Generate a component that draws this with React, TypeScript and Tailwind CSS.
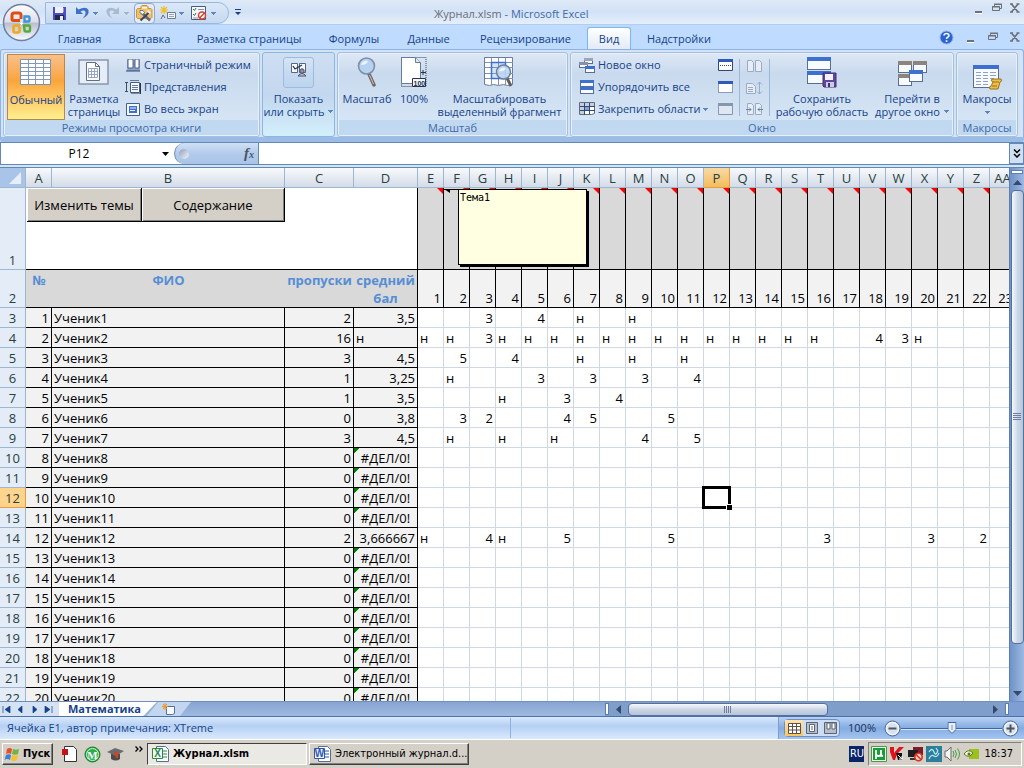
import React, { useState } from 'react';

const COLUMNS = 'E F G H I J K L M N O P Q R S T U V W X Y Z AA'.split(' ');

interface Student {
  missed: number;
  average: string;
  marks: Record<string, string>;
}

const NO_AVERAGE = '#ДЕЛ/0!';

const ABSENT_ROW: Record<string, string> = {
  E: 'н', F: 'н', G: '3', H: 'н', I: 'н', J: 'н', K: 'н', L: 'н', M: 'н', N: 'н', O: 'н',
  P: 'н', Q: 'н', R: 'н', S: 'н', T: 'н', V: '4', W: '3', X: 'н',
};

const empty: Student = { missed: 0, average: NO_AVERAGE, marks: {} };

const STUDENTS: Student[] = [
  { missed: 2, average: '3,5', marks: { G: '3', I: '4', K: 'н', M: 'н' } },
  { missed: 16, average: 'н', marks: ABSENT_ROW },
  { missed: 3, average: '4,5', marks: { F: '5', H: '4', K: 'н', M: 'н', O: 'н' } },
  { missed: 1, average: '3,25', marks: { F: 'н', I: '3', K: '3', M: '3', O: '4' } },
  { missed: 1, average: '3,5', marks: { H: 'н', J: '3', L: '4' } },
  { missed: 0, average: '3,8', marks: { F: '3', G: '2', J: '4', K: '5', N: '5' } },
  { missed: 3, average: '4,5', marks: { F: 'н', H: 'н', J: 'н', M: '4', O: '5' } },
  empty, empty, empty, empty,
  { missed: 2, average: '3,666667', marks: { E: 'н', G: '4', H: 'н', J: '5', N: '5', T: '3', X: '3', Z: '2' } },
  empty, empty, empty, empty, empty, empty, empty, empty,
];

/* ---------- small shared bits ---------- */

function Caret({ className = 'fill-[#5b86c4]' }: { className?: string }) {
  return (
    <svg width="5" height="3" viewBox="0 0 5 3" shapeRendering="crispEdges" className={`shrink-0 ${className}`}><path d="M0 0h5v1H0zM1 1h3v1H1zM2 2h1v1H2z" /></svg>
  );
}

function MinimizeGlyph() {
  return <svg width="10" height="12" viewBox="0 0 10 12"><path d="M1 9h7v2H1z" fill="#6d7076" /><path d="M1 11h7v1H1z" fill="#fff" /></svg>;
}

function RestoreGlyph() {
  return (
    <svg width="10" height="12" viewBox="0 0 10 12" fill="none" stroke="#6d7076">
      <path d="M2.500 4.500v-2h7v4h-2M2 2h8" />
      <path d="M.5 4.500h7v4h-7zM0 5h8" />
    </svg>
  );
}

function CloseGlyph() {
  return <svg width="10" height="12" viewBox="0 0 10 12"><path d="M1.500 2l6.500 8M8 2l-6.500 8M0 2h3M6.500 2h3M0 10h3M6.500 10h3" stroke="#6d7076" strokeWidth="1.700" /></svg>;
}

/* ---------- title bar ---------- */

function OfficeButton() {
  return (
    <button aria-label="Кнопка Office" className="absolute left-0.5 top-0.5 z-20 size-10">
      <svg width="40" height="40" viewBox="0 0 40 40">
        <defs>
          <linearGradient id="orb" x1="0" y1="0" x2="0" y2="1">
            <stop offset="0" stopColor="#fdfdfe" />
            <stop offset=".48" stopColor="#dde0ea" />
            <stop offset=".52" stopColor="#b9bfd0" />
            <stop offset="1" stopColor="#fbfcff" />
          </linearGradient>
        </defs>
        <circle cx="19.500" cy="20.500" r="18" fill="url(#orb)" stroke="#6f7f9c" strokeWidth="1.500" />
        <g fill="none" strokeWidth="3">
          <path d="M18 18.500h-6.500q-1.500 0-1.500-1.500v-4q0-2 2-2h5q2 0 2 2v4" stroke="#df4d12" />
          <path d="M22.500 14.500h4q1 0 1 1v3q0 1-1 1h-4z" stroke="#3f93d8" strokeWidth="2.400" />
          <path d="M18 23.500h-5q-1.500 0-1.500 1.500v4q0 1.500 1.500 1.500h3q1.500 0 1.500-1.500v-4" stroke="#f2a81a" strokeWidth="2.600" />
          <path d="M22 23.500h5q1 0 1 1v4q0 1-1 1h-3q-1.500 0-1.500-1.500z" stroke="#55ab3a" strokeWidth="2.400" />
        </g>
        <g fill="#fff"><path d="M18 21h3v1h-3zM19 20h1v3h-1z" /></g>
      </svg>
    </button>
  );
}

function QuickAccess() {
  return (
    <div className="ml-[45px] mt-0.5 flex h-[22px] w-[184px] items-center rounded-r-full border border-[#9cb9dd] bg-gradient-to-b from-[#dbe8f8] to-[#c5d9f2] pl-1.5">
      <button aria-label="Сохранить" className="w-[23px]">
        <svg width="15" height="15" viewBox="0 0 15 15">
          <path d="M1 1h13v13H1z" fill="#4b50b8" />
          <path d="M3 1h8v6H3z" fill="#eef1fb" /><path d="M11 2h1v4h-1z" fill="#8f95df" />
          <path d="M3 9h9v5H3z" fill="#23264f" /><path d="M8 10h3v4H8z" fill="#e9ebf5" />
        </svg>
      </button>
      <button aria-label="Отменить" className="flex w-[31px] items-center gap-[3px]">
        <svg width="15" height="14" viewBox="0 0 15 14"><path d="M1 1v7h7L5.500 5.500q4-2 5 .5.500 3-3 6.500 7-3 6-8.500Q11 0 3.500 3.500z" fill="#3f6fc8" /></svg>
        <Caret />
      </button>
      <button aria-label="Повторить" className="flex w-7 items-center gap-[3px]">
        <svg width="15" height="14" viewBox="0 0 15 14"><path d="M13 1v7H6l2.500-2.500q-4-2-5 .5-.5 3 3 6.500-7-3-6-8.500Q3 0 10.500 3.500z" fill="#a9b9cf" /></svg>
        <Caret className="fill-[#a5b4c9]" />
      </button>
      <button aria-label="Конструктор" className="mr-[5px] flex size-[21px] items-center justify-center rounded-sm border border-[#8fa7ca] bg-[#e2ebf8]">
        <svg width="17" height="17" viewBox="0 0 17 17">
          <path d="M.5 4.500l1-1h3.500v-2l1-1h5l1 1v2H15l1 1v8l-1 1H1.500l-1-1z" fill="#f1c06a" stroke="#cf9432" />
          <path d="M6 2h5v1.500H6z" fill="#fff" />
          <path d="M6 8l8 7.500" stroke="#5a6a84" strokeWidth="2.400" />
          <path d="M13 7.500l-8.500 8" stroke="#39475f" strokeWidth="2" />
          <path d="M4 5.500h3l1.500 2L7 9.500l-3-1.500z" fill="#eef3fa" stroke="#54637c" strokeWidth=".8" />
          <path d="M11.500 5.500l3 3" stroke="#eef3fa" strokeWidth="2" />
        </svg>
      </button>
      <button aria-label="Вставить элемент" className="flex w-[31px] items-center gap-0.5">
        <svg width="17" height="15" viewBox="0 0 17 15">
          <path d="M4 0v8M0 4h8M1 1l6 6M7 1L1 7" stroke="#f0c020" strokeWidth="1.200" />
          <path d="M7.500 6.500h8v6h-8z" fill="#f2f5fa" stroke="#6c7d98" /><path d="M9 8.500h5M9 10.500h5" stroke="#94a3bb" />
          <path d="M1 13l2-4 2 3" stroke="#5d6b83" fill="none" />
        </svg>
        <Caret />
      </button>
      <button aria-label="Режим правки" className="flex items-center gap-[3px]">
        <svg width="17" height="15" viewBox="0 0 17 15">
          <path d="M.5.500h14v13H.5z" fill="#f4f6fa" stroke="#4a5b78" />
          <path d="M2 3l1.500 1.500L5 2M2 8l1.500 1.500L5 7" stroke="#3b6f3d" fill="none" /><path d="M7 3.500h6M2 12h5" stroke="#8494ae" />
          <circle cx="11" cy="9.500" r="3.500" fill="#fff" stroke="#d8412c" strokeWidth="1.500" /><path d="M8.500 12l5-5" stroke="#d8412c" strokeWidth="1.400" />
        </svg>
        <Caret />
      </button>
    </div>
  );
}

function TitleBar() {
  return (
    <header className="relative flex h-[25px] shrink-0 border-b border-[#b0cdf2] bg-gradient-to-b from-[#dfe9f6] via-[#d2e2f7] to-[#e6effa]">
      <QuickAccess />
      <button aria-label="Настройка панели" className="ml-1.5 h-6">
        <svg width="6" height="7" viewBox="0 0 6 7"><path d="M0 0h6v1H0zM0 3h6L3 6z" fill="#1d3f84" /></svg>
      </button>
      <h1 className="flex-1 pt-1.5 pl-[193px] text-[11px] leading-4 whitespace-nowrap text-[#3e6aaa]"><span className="text-[#6b6e75]">Журнал.xlsm</span> - Microsoft Excel</h1>
      <div className="flex items-start gap-2 pt-0.5 pr-1">
        <button aria-label="Свернуть"><MinimizeGlyph /></button>
        <button aria-label="Восстановить"><RestoreGlyph /></button>
        <button aria-label="Закрыть"><CloseGlyph /></button>
      </div>
    </header>
  );
}

function TabBar() {
  const tab = 'h-6 pt-1 px-4 whitespace-nowrap flex justify-center';
  return (
    <nav className="flex h-6 shrink-0 bg-[#bfdbff] pl-[43px] text-[11px] leading-5 text-[#15428b]">
      <button className={`${tab} w-[73px]`}>Главная</button>
      <button className={`${tab} w-[67px]`}>Вставка</button>
      <button className={`${tab} w-[132px]`}>Разметка страницы</button>
      <button className={`${tab} w-[78px]`}>Формулы</button>
      <button className={`${tab} w-[71px]`}>Данные</button>
      <button className={`${tab} w-[123px]`}>Рецензирование</button>
      <button className="mt-0.5 flex h-[23px] w-11 justify-center rounded-t-[3px] border border-b-0 border-[#8db2e3] bg-gradient-to-b from-white to-[#e0eaf6] pt-px shadow-[0_0_2px_#7ef]">Вид</button>
      <button className={`${tab} w-24`}>Надстройки</button>
      <div className="flex flex-1 items-center justify-end gap-3 pr-1">
        <button aria-label="Справка">
          <svg width="15" height="15" viewBox="0 0 15 15">
            <circle cx="7.500" cy="7.500" r="6.500" fill="#2d63cf" stroke="#8fb5ec" />
            <path d="M5 5.500q.3-2 2.500-2t2.500 2q0 1-1.300 1.700Q7.500 8 7.500 9" stroke="#fff" strokeWidth="1.600" fill="none" /><path d="M6.700 10.300h1.700V12H6.700z" fill="#fff" />
          </svg>
        </button>
        <button aria-label="Свернуть книгу"><MinimizeGlyph /></button>
        <button aria-label="Восстановить книгу"><RestoreGlyph /></button>
        <button aria-label="Закрыть книгу"><CloseGlyph /></button>
      </div>
    </nav>
  );
}

/* ---------- ribbon ---------- */

function Group({ title, className, children }: { title: string; className: string; children: React.ReactNode }) {
  return (
    <section className={`flex h-[85px] flex-col overflow-hidden rounded-[3px] border border-[#a3c0e2] bg-gradient-to-b from-[#dee8f5] from-0% via-[#c9daee] via-25% to-[#d9e9f7] shadow-[inset_0_0_0_1px_#e6f0fa] ${className}`}>
      <div className="flex min-h-0 flex-1">{children}</div>
      <h2 className="mx-px mb-px h-[15px] bg-[#c1d8f1] text-center text-[11px] leading-4 text-[#3e6aaa]">{title}</h2>
    </section>
  );
}

function BigButton({ icon, lines, menu, className = '' }: { icon: React.ReactNode; lines: string[]; menu?: boolean; className?: string }) {
  return (
    <button className={`flex flex-col items-center pt-1 whitespace-nowrap ${className}`}>
      <span className="flex h-[35px] items-start justify-center">{icon}</span>
      {lines.map((line, i) => (
        <span key={line} className="flex items-center gap-1 leading-[13px]">
          {line}{menu && i === lines.length - 1 && i > 0 && <Caret />}
        </span>
      ))}
      {menu && lines.length === 1 && <span className="pt-1.5"><Caret /></span>}
    </button>
  );
}

function SmallButton({ icon, label, menu }: { icon: React.ReactNode; label: string; menu?: boolean }) {
  return (
    <button className="flex h-[22px] items-center gap-[3px] whitespace-nowrap">
      <span className="flex w-4 justify-center">{icon}</span>{label}{menu && <Caret />}
    </button>
  );
}

function GridIcon() {
  return (
    <svg width="32" height="27" viewBox="0 0 32 27">
      <path d="M.5.500h30v25H.5z" fill="#fff" stroke="#7890b5" />
      <path d="M1 4.500h30M1 8.500h30M1 12.500h30M1 16.500h30M1 20.500h30M8.500 1v25M15.500 1v25M23.500 1v25" stroke="#8098bb" />
    </svg>
  );
}

function PageLayoutIcon() {
  return (
    <svg width="32" height="27" viewBox="0 0 32 27">
      <path d="M1 1h29v24H1z" fill="#e4edf8" stroke="#8b97aa" strokeWidth="1.500" />
      <path d="M8.500 3.500h9l4 4v14h-13z" fill="#fff" stroke="#5f6f88" /><path d="M17.500 3.500v4h4" fill="none" stroke="#5f6f88" />
      <path d="M10.500 9.500h9v9h-9zM10.500 12.500h9M10.500 15.500h9M13.500 9.500v9M16.500 9.500v9" fill="none" stroke="#93a5c0" />
    </svg>
  );
}

function PageBreakIcon() {
  return (
    <svg width="15" height="13" viewBox="0 0 15 13">
      <path d="M1 1h13v11H1z" fill="#8ea3c4" /><path d="M2 0h5v9H2zM9 0h4v9H9z" fill="#fff" stroke="#46608e" /><path d="M0 11.500h14v1H0z" fill="#2f4674" />
    </svg>
  );
}

function ViewsIcon() {
  return (
    <svg width="16" height="14" viewBox="0 0 16 14" fill="none">
      <path d="M0 2.500h3M0 11.500h3M1.500 3v9" stroke="#3d4d68" />
      <path d="M5.500 2.500h9v10h-9z" fill="#f4f7fc" stroke="#4a5a78" /><path d="M5 .500h9M7 5.500h6M7 7.500h6M7 9.500h6" stroke="#5f789f" /><path d="M15.500 3v11H6" stroke="#26344f" />
    </svg>
  );
}

function FullScreenIcon() {
  return (
    <svg width="14" height="13" viewBox="0 0 14 13">
      <path d="M.5.500h13v12H.5z" fill="#f4f8ff" stroke="#46608e" /><path d="M3 3h8v7H3z" fill="#3e70cf" /><path d="M4 5h6M4 7.500h5" stroke="#e8f0ff" />
    </svg>
  );
}

function ShowHideIcon() {
  return (
    <span className="flex size-[31px] items-start justify-center rounded-[3px] border border-[#9dbbdf] bg-gradient-to-b from-[#d5e4f5] via-[#c6daf0] to-[#bcd5ee] pt-1">
      <svg width="16" height="16" viewBox="0 0 16 16">
        <path d="M.5 1.500h6v9h-6zM8.500 1.500h6v9h-6z" fill="#f7f9fd" stroke="#5a6580" />
        <path d="M2 4l2 3 7-4" stroke="#26344f" fill="none" strokeWidth="1.300" />
        <circle cx="11" cy="9" r="2.200" fill="#8d93ad" stroke="#4b5064" /><path d="M7 14q4-5 8 0z" fill="#c9cddd" stroke="#4b5064" />
      </svg>
    </span>
  );
}

function MagnifierIcon() {
  return (
    <svg width="20" height="30" viewBox="0 0 20 30">
      <path d="M12 17l5 11" stroke="#6f6a68" strokeWidth="3.500" strokeLinecap="round" /><path d="M12.500 18l4 9" stroke="#c9c3bd" />
      <circle cx="9.500" cy="9" r="8" fill="#b5d2f1" stroke="#7d8fa9" strokeWidth="1.600" /><path d="M4 8q1-5 7-4-1 4-7 4z" fill="#e9f4ff" />
    </svg>
  );
}

function HundredIcon() {
  return (
    <svg width="26" height="31" viewBox="0 0 26 31">
      <path d="M.5.500h24.500v29H.5z" fill="none" stroke="#39465c" strokeDasharray="1 1" />
      <path d="M.5.500h14l5 5v21H.5z" fill="#fff" stroke="#6a7b96" /><path d="M14.500.500v5h5" fill="#dfe7f3" stroke="#6a7b96" />
      <path d="M20 15.500h5M22 13v5" stroke="#26344f" /><path d="M11.500 21.500h13v8h-13z" fill="#f3f5f9" stroke="#26344f" />
      <text x="12.500" y="28.500" fontSize="7" fontWeight="bold" fill="#26344f" fontFamily="Liberation Sans, sans-serif">100</text>
    </svg>
  );
}

function ZoomSelectionIcon() {
  return (
    <svg width="31" height="31" viewBox="0 0 31 31">
      <path d="M.5.500h28v27l-5 1-4-1-5 1-5-1-4 1-5-1z" fill="#fff" stroke="#6b7d9b" />
      <path d="M7 6h15v15H7z" fill="#d4e4fa" />
      <path d="M1 5.500h28M1 10.500h28M1 16.500h28M1 21.500h28M7.500 1v27M14.500 1v27M21.500 1v27" stroke="#7f93b3" /><path d="M7.500 5.500h14v16h-14z" fill="none" stroke="#3e70cf" strokeWidth="1.500" />
      <path d="M23 21l4 8" stroke="#645f5d" strokeWidth="3" /><circle cx="19.500" cy="15" r="7" fill="#bcd7f3" fillOpacity=".9" stroke="#6b7f9e" strokeWidth="1.500" /><path d="M15 14q2-5 7-3-2 4-7 3z" fill="#eef6ff" />
    </svg>
  );
}

function Win({ x, y, w, h, head = '#3e70cf' }: { x: number; y: number; w: number; h: number; head?: string }) {
  return (
    <g>
      <rect x={x + 0.5} y={y + 0.5} width={w - 1} height={h - 1} fill="#f7faff" stroke="#5a6e92" />
      <rect x={x} y={y} width={w} height={h > 9 ? 4 : 3} fill={head} />
    </g>
  );
}

function NewWindowIcon() {
  return <svg width="16" height="15" viewBox="0 0 16 15"><Win x={5} y={0} w={9} h={6} head="#9aa5ba" /><Win x={0} y={4} w={9} h={6} head="#8492ad" /><Win x={6} y={8} w={10} h={7} /></svg>;
}

function ArrangeIcon() {
  return <svg width="14" height="14" viewBox="0 0 14 14"><Win x={0} y={0} w={14} h={7} /><Win x={0} y={7} w={14} h={7} /></svg>;
}

function FreezeIcon() {
  return (
    <svg width="16" height="14" viewBox="0 0 16 14">
      <path d="M.5.500h15v11l-3 1H.5z" fill="#fff" stroke="#5c6c88" /><path d="M1 1h14v3H1zM1 4h4v8H1z" fill="#c6cedb" />
      <path d="M1 4.500h15M5.500 1v12M10.500 1v11M1 8.500h15" stroke="#33486f" /><path d="M6 5h4v3H6z" fill="#79a3e6" />
    </svg>
  );
}

function SaveWorkspaceIcon() {
  return (
    <svg width="32" height="32" viewBox="0 0 32 32">
      <Win x={1} y={0} w={24} h={13} /><Win x={1} y={14} w={24} h={13} />
      <path d="M17 16h13v14H18l-1-1z" fill="#5d479c" stroke="#3e2f74" /><path d="M19 17h8v6h-8z" fill="#f3f2fa" /><path d="M20 25h8v5h-8z" fill="#cfc9e4" /><path d="M22 26h2v4h-2z" fill="#3e2f74" />
    </svg>
  );
}

function SwitchWindowIcon() {
  return (
    <svg width="31" height="27" viewBox="0 0 31 27">
      <Win x={1} y={0} w={14} h={12} head="#8b8580" /><Win x={16} y={0} w={14} h={12} head="#8b8580" /><Win x={1} y={13} w={14} h={12} head="#8b8580" /><Win x={12} y={9} w={14} h={12} />
    </svg>
  );
}

function MacrosIcon() {
  return (
    <svg width="31" height="26" viewBox="0 0 31 26">
      <Win x={1} y={0} w={26} h={23} />
      <path d="M4 7.500h5M11 7.500h5M18 7.500h6M4 10.500h5M11 10.500h5M18 10.500h6M4 13.500h5M11 13.500h5M18 13.500h4M4 16.500h5M11 16.500h5M4 19.500h5M11 19.500h5" stroke="#8fa1bf" />
      <path d="M20 14h9q2 2-1 3l-2 7h-8q-2-2 1-3l2-4q-3-1-1-3z" fill="#edbd4c" stroke="#9a7218" /><path d="M21 17h6M20 21h5" stroke="#9a7218" />
    </svg>
  );
}

function SplitIcon({ kind }: { kind: 'split' | 'hide' | 'show' }) {
  return (
    <svg width="15" height="12" viewBox="0 0 15 12">
      <path d="M.5.500h14v11H.5z" fill={kind === 'show' ? '#dfe7f2' : '#fff'} stroke={kind === 'show' ? '#8795ad' : '#33486f'} strokeDasharray={kind === 'hide' ? '1 1' : undefined} />
      <path d="M0 0h15v3H0z" fill={kind === 'show' ? '#8795ad' : '#2c5bb8'} />
      {kind === 'split' && <path d="M2 6.500h11" stroke="#33486f" strokeDasharray="1 1" />}
    </svg>
  );
}

function CompareIcon({ kind }: { kind: 'side' | 'sync' | 'reset' }) {
  return (
    <svg width="17" height="14" viewBox="0 0 17 14" fill="none" stroke="#9aabc6">
      {kind === 'sync' ? (
        <>
          <path d="M.5 2.500h6l3 3v7h-9zM2 6.500h5M2 8.500h5M2 10.500h5" fill="#e6edf7" />
          <path d="M13.500 1v12M11 3.500L13.500 1 16 3.500M11 10.500l2.500 2.500 2.500-2.500" />
        </>
      ) : (
        <path d="M1.500 1.500h4l2 2v9h-6zM9.500 1.500h4l2 2v9h-6z" fill="#e6edf7" />
      )}
      {kind === 'reset' && <path d="M0 7.500h5M3 5.500l2 2-2 2M17 7.500h-5M14 5.500l-2 2 2 2" stroke="#6c82a6" />}
    </svg>
  );
}

function Ribbon() {
  return (
    <div className="flex h-[93px] shrink-0 gap-0.5 rounded-[3px] border-x border-t border-b-[5px] border-[#8db2e3] border-b-[#9bbce6] bg-[#d3e3f4] pt-0.5 pr-[5px] pl-0.5 text-[11px] text-[#15428b]">
      <Group title="Режимы просмотра книги" className="w-[257px] shrink-0">
        <button className="mt-px ml-[3px] flex h-[66px] w-[58px] flex-col items-center border border-[#b98848] bg-gradient-to-b from-[#f8c089] via-[#fba43a] via-40% to-[#fff08f] pt-1 leading-[13px]">
          <span className="h-[34px]"><GridIcon /></span>Обычный
        </button>
        <BigButton icon={<span className="pt-0.5"><PageLayoutIcon /></span>} lines={['Разметка', 'страницы']} className="w-[58px]" />
        <div className="flex flex-col pt-px pl-0.5">
          <SmallButton icon={<PageBreakIcon />} label="Страничный режим" />
          <SmallButton icon={<ViewsIcon />} label="Представления" />
          <SmallButton icon={<FullScreenIcon />} label="Во весь экран" />
        </div>
      </Group>
      <section className="flex h-[85px] w-[73px] shrink-0 justify-center rounded-[3px] border border-[#8fb6de] bg-gradient-to-b from-[#cfdff2] via-[#c3d7ee] to-[#d3effc]">
        <BigButton icon={<ShowHideIcon />} lines={['Показать', 'или скрыть']} menu />
      </section>
      <Group title="Масштаб" className="w-[231px] shrink-0">
        <BigButton icon={<MagnifierIcon />} lines={['Масштаб']} className="w-[58px]" />
        <BigButton icon={<HundredIcon />} lines={['100%']} className="w-9" />
        <BigButton icon={<ZoomSelectionIcon />} lines={['Масштабировать', 'выделенный фрагмент']} className="flex-1" />
      </Group>
      <Group title="Окно" className="min-w-[383px] flex-1">
        <div className="flex w-[140px] flex-col pt-px pl-2">
          <SmallButton icon={<NewWindowIcon />} label="Новое окно" />
          <SmallButton icon={<ArrangeIcon />} label="Упорядочить все" />
          <SmallButton icon={<FreezeIcon />} label="Закрепить области" menu />
        </div>
        <div className="flex w-[28px] flex-col items-center pt-px">
          <button aria-label="Разделить" className="flex h-[22px] items-center"><SplitIcon kind="split" /></button>
          <button aria-label="Скрыть" className="flex h-[22px] items-center"><SplitIcon kind="hide" /></button>
          <button aria-label="Отобразить" className="flex h-[22px] items-center"><SplitIcon kind="show" /></button>
        </div>
        <div className="mt-1.5 flex h-[57px] w-[31px] flex-col items-center justify-between border-x border-[#9fb7d6]">
          <button aria-label="Рядом"><CompareIcon kind="side" /></button>
          <button aria-label="Синхронная прокрутка"><CompareIcon kind="sync" /></button>
          <button aria-label="Восстановить расположение"><CompareIcon kind="reset" /></button>
        </div>
        <BigButton icon={<SaveWorkspaceIcon />} lines={['Сохранить', 'рабочую область']} className="w-[104px]" />
        <BigButton icon={<span className="pt-1"><SwitchWindowIcon /></span>} lines={['Перейти в', 'другое окно']} menu className="w-[76px]" />
      </Group>
      <Group title="Макросы" className="w-[62px] shrink-0">
        <BigButton icon={<span className="pt-2"><MacrosIcon /></span>} lines={['Макросы']} menu className="flex-1" />
      </Group>
    </div>
  );
}

/* ---------- formula bar ---------- */

function FormulaBar() {
  return (
    <div className="shrink-0 border-b border-[#6488b4] bg-[#d5e4f5] pb-0.5">
      <div className="flex h-[23px] border-y border-[#6488b4] bg-white">
        <input aria-label="Имя" defaultValue="P12" className="w-[157px] border-l border-[#6488b4] text-center text-[12px] text-black outline-none" />
        <button aria-label="Список имён" className="flex w-[17px] items-center justify-center">
          <svg width="7" height="4" viewBox="0 0 7 4"><path d="M0 0h7L3.500 4z" /></svg>
        </button>
        <div className="flex w-[85px] items-center justify-between rounded-l-full border-x border-[#6488b4] bg-gradient-to-b from-[#d0e0f5] via-[#b3cbec] to-[#a9c4e9] px-1">
          <span className="size-2.5 rounded-full bg-gradient-to-br from-[#8fa0bb] to-[#f4f7fc]" />
          <button aria-label="Вставить функцию" className="font-[Liberation_Serif,serif] text-[15px] leading-4 font-bold text-[#4a5568] italic">f<span className="text-[10px]">x</span></button>
        </div>
        <input aria-label="Строка формул" className="min-w-0 flex-1 outline-none" />
        <button aria-label="Развернуть строку формул" className="flex w-[15px] items-center justify-center border border-[#6488b4] bg-[#cfdff4]">
          <svg width="8" height="9" viewBox="0 0 8 9" fill="none" stroke="#000" strokeWidth="1.500"><path d="M1 .5l3 3 3-3M1 5l3 3 3-3" /></svg>
        </button>
      </div>
    </div>
  );
}

/* ---------- worksheet ---------- */

function ColumnHeader({ name, active }: { name: string; active?: boolean }) {
  return (
    <th className={active
      ? 'border-r border-b border-[#ee9a3a] bg-gradient-to-b from-[#f8d9a4] to-[#f2bd5c] font-normal'
      : 'border-r border-b border-[#9eb6ce] bg-gradient-to-b from-[#f8fafc] to-[#d4dce8] font-normal'}
    >
      {name}
    </th>
  );
}

function RowHeader({ row, active }: { row: number; active?: boolean }) {
  return (
    <th className={active
      ? 'border-r border-b border-[#ee9a3a] bg-[#ffd58d] align-bottom font-normal text-[#27413e]'
      : 'border-r border-b border-[#9eb6ce] bg-[#e4ecf7] align-bottom font-normal text-[#27413e]'}
    >
      {row}
    </th>
  );
}

function Comment() {
  return (
    <div className="absolute top-[21px] left-[458px] h-[76px] w-[129px] border border-black bg-[#ffffe1] px-px font-[DejaVu_Sans_Mono,monospace] text-[10px] leading-4 text-black shadow-[2px_2px_0_#000]">
      Тема1
      <svg width="15" height="5" viewBox="0 0 15 5" className="absolute -top-px -left-[15px]"><path d="M0 .5h15" stroke="#000" /><path d="M0 0h6v4z" /></svg>
    </div>
  );
}

function Sheet() {
  const info = 'border-r border-b border-black bg-[#f2f2f2]';
  return (
    <div className="relative min-w-0 flex-1 overflow-hidden bg-white font-[Open_Sans,sans-serif] text-[13px] leading-[18px] text-black">
      <table className="w-[1016px] table-fixed border-separate border-spacing-0 whitespace-nowrap">
        <colgroup>
          <col className="w-[26px]" /><col className="w-[26px]" /><col className="w-[233px]" /><col className="w-[69px]" /><col className="w-16" />
          {COLUMNS.map((c) => <col key={c} className="w-[26px]" />)}
        </colgroup>
        <thead>
          <tr className="h-5 text-[#27413e]">
            <th className="border-r border-b border-[#9eb6ce] bg-[#a9c4e9]">
              <svg width="12" height="12" viewBox="0 0 12 12" className="ml-auto mr-1"><path d="M12 0v12H0z" fill="#e6eef8" /></svg>
            </th>
            {['A', 'B', 'C', 'D', ...COLUMNS].map((c) => <ColumnHeader key={c} name={c} active={c === 'P'} />)}
          </tr>
        </thead>
        <tbody>
          <tr className="h-[82px]">
            <RowHeader row={1} />
            <td colSpan={2} className="border-b border-black align-top">
              <div className="flex h-[34px] pl-px">
                <button className="w-[115px] border-r border-b border-black bg-[#d4d0c8] shadow-[inset_1px_1px_0_#fff,inset_-1px_-1px_0_#808080]">Изменить темы</button>
                <button className="flex-1 border-r border-b border-black bg-[#d4d0c8] shadow-[inset_1px_1px_0_#fff,inset_-1px_-1px_0_#808080]">Содержание</button>
              </div>
            </td>
            <td className="border-b border-black" />
            <td className="border-r border-b border-black" />
            {COLUMNS.map((c) => (
              <td key={c} className="border-r border-b border-black bg-[#d9d9d9] align-top">
                <svg width="6" height="6" viewBox="0 0 6 6" className="ml-auto"><path d="M0 0h6v6z" fill="#f00" /></svg>
              </td>
            ))}
          </tr>
          <tr className="h-[38px]">
            <RowHeader row={2} />
            {['№', 'ФИО', 'пропуски', 'средний бал'].map((h) => (
              <td key={h} className="border-b border-black bg-[#d9d9d9] p-0 text-center align-bottom font-bold whitespace-normal text-[#558ed5] [&:nth-child(5)]:border-r">
                <div className="h-9">{h}</div>
              </td>
            ))}
            {COLUMNS.map((c, i) => (
              <td key={c} className="border-r border-b border-black bg-[#f2f2f2] pr-0.5 text-right align-bottom">{i + 1}</td>
            ))}
          </tr>
          {STUDENTS.map((s, i) => (
            <tr key={i} className="h-5">
              <RowHeader row={i + 3} active={i === 9} />
              <td className={`${info} pr-0.5 text-right`}>{i + 1}</td>
              <td className={`${info} pl-0.5`}>Ученик{i + 1}</td>
              <td className={`${info} pr-0.5 text-right`}>{s.missed}</td>
              {s.average === NO_AVERAGE ? (
                <td className={`${info} bg-[linear-gradient(135deg,#008000_4px,transparent_4px)] text-center`}>{s.average}</td>
              ) : (
                <td className={s.average === 'н' ? `${info} pl-0.5` : `${info} pr-0.5 text-right`}>{s.average}</td>
              )}
              {COLUMNS.map((c) => {
                const mark = s.marks[c];
                const selected = c === 'P' && i === 9;
                return (
                  <td key={c} className={`border-r border-b border-[#d0d7e5] px-0.5 ${mark === 'н' ? 'text-left' : 'text-right'} ${selected ? 'relative' : ''}`}>
                    {mark}
                    {selected && (
                      <span className="absolute -inset-0.5 border-[3px] border-black">
                        <span className="absolute -right-1 -bottom-1 size-[6px] border-t border-l border-white bg-black" />
                      </span>
                    )}
                  </td>
                );
              })}
            </tr>
          ))}
        </tbody>
      </table>
      <Comment />
    </div>
  );
}

function VerticalScroll() {
  return (
    <div className="flex w-[15px] shrink-0 flex-col items-center border-l border-[#5b7fb5] bg-gradient-to-r from-[#6f93c6] to-[#9cb9e2]">
      <div className="mt-0.5 h-1 w-3 border border-[#5b7fb5] bg-white" />
      <button aria-label="Вверх" className="flex h-4 w-full items-center justify-center">
        <svg width="9" height="5" viewBox="0 0 9 5"><path d="M0 5h9L4.500 0z" fill="#34496f" /></svg>
      </button>
      <div className="flex w-[13px] flex-[454] items-center justify-center rounded-sm border border-[#566f9c] bg-gradient-to-r from-[#f5f8fc] via-[#cdd9e8] to-[#b4c5dc]">
        <svg width="8" height="8" viewBox="0 0 8 8" stroke="#6d7f9c"><path d="M0 .5h8M0 2.500h8M0 4.500h8M0 6.500h8" /></svg>
      </div>
      <div className="flex-[41]" />
      <button aria-label="Вниз" className="flex h-4 w-full items-center justify-center">
        <svg width="9" height="5" viewBox="0 0 9 5"><path d="M0 0h9L4.500 5z" fill="#34496f" /></svg>
      </button>
    </div>
  );
}

function SheetTabs() {
  return (
    <div className="flex h-4 shrink-0 border-y border-[#6f8fbf] border-b-[#4a72ac] bg-gradient-to-b from-[#86a5d2] to-[#a0b9df]">
      <div className="flex w-[59px] items-center justify-around bg-[#d5e2f3] pr-1">
        {['M1 0v7M8 0L3 3.500 8 7z', 'M6 0L2 3.500 6 7z', 'M3 0l4 3.500L3 7z', 'M8 0v7M1 0l5 3.500L1 7z'].map((d, i) => (
          <button key={d} aria-label={`Лист, переход ${i + 1}`}><svg width="9" height="7" viewBox="0 0 9 7"><path d={d} fill="#15428b" stroke="#15428b" strokeWidth=".7" /></svg></button>
        ))}
      </div>
      <button className="h-[14px] w-[98px] bg-white pl-[9px] text-left text-[11px] leading-[14px] font-bold text-[#15428b] [clip-path:polygon(0_0,100%_0,86%_100%,0_100%)]">Математика</button>
      <button aria-label="Вставить лист" className="-ml-2.5 flex h-[14px] w-[44px] items-center justify-center bg-[#c4d6ef] [clip-path:polygon(25%_0,100%_0,75%_100%,0_100%)]">
        <svg width="16" height="13" viewBox="0 0 16 13">
          <path d="M5.500 3.500h8v7l-2 1h-6z" fill="#f5f8fd" stroke="#56709c" /><path d="M4 0v7M1 3.500h6M2 1l4 5M6 1L2 6" stroke="#e89a1c" />
        </svg>
      </button>
      <div className="flex-1" />
      <div className="flex w-[404px] items-center bg-[#7f9fca]">
        <div className="h-3 w-1 border border-[#5b7fb5] bg-white" />
        <button aria-label="Влево" className="flex w-[19px] justify-center"><svg width="5" height="9" viewBox="0 0 5 9"><path d="M5 0v9L0 4.500z" fill="#34496f" /></svg></button>
        <div className="flex h-[13px] w-[200px] items-center justify-center rounded-sm border border-[#566f9c] bg-gradient-to-b from-[#f7f9fd] via-[#ccd7e6] to-[#b5c4da]">
          <svg width="8" height="7" viewBox="0 0 8 7" stroke="#6d7f9c"><path d="M.5 0v7M2.500 0v7M4.500 0v7M6.500 0v7" /></svg>
        </div>
        <div className="flex-1" />
        <button aria-label="Вправо" className="flex w-5 justify-center"><svg width="5" height="9" viewBox="0 0 5 9"><path d="M0 0v9l5-4.500z" fill="#34496f" /></svg></button>
        <div className="h-3 w-1 border border-[#5b7fb5] bg-white" />
      </div>
      <div className="w-[15px] bg-[#7f9fd4]" />
    </div>
  );
}

/* ---------- status bar ---------- */

function StatusBar() {
  const [zoom, setZoom] = useState(50);
  return (
    <div className="flex h-[22px] shrink-0 items-center bg-gradient-to-b from-[#dbe9fb] via-[#b5d0f4] via-40% to-[#d9e9fc] text-[11px] text-[#15428b]">
      <div className="w-[511px] border-r border-[#8fb0dd] pl-[7px] leading-5">Ячейка E1, автор примечания: XTreme</div>
      <div className="flex-1" />
      <div className="flex h-full w-[246px] items-center border-l border-[#7d9fd0] bg-gradient-to-b from-[#b9d1f2] via-[#83ace3] via-50% to-[#a5c5f1] pl-[5px]">
        <div className="flex h-[18px] rounded-sm border border-[#6d90c4] bg-[#cdddf3]">
          <button aria-label="Обычный" className="flex w-[18px] items-center justify-center bg-gradient-to-b from-[#fde3b0] to-[#fbc55b]">
            <svg width="13" height="11" viewBox="0 0 13 11"><path d="M.5.500h12v10H.5zM.5 3.500h12M.5 7h12M4.500 0v11M8.500 0v11" fill="#fff" stroke="#5b5046" /></svg>
          </button>
          <button aria-label="Разметка страницы" className="flex w-[18px] items-center justify-center">
            <svg width="12" height="12" viewBox="0 0 12 12"><path d="M.5.500h11v11H.5z" fill="#b4bfcf" stroke="#5d6370" /><path d="M3.500 2.500h5v7h-5z" fill="#fff" stroke="#5d6370" /><path d="M5 5h2M5 7h2" stroke="#5d6370" /></svg>
          </button>
          <button aria-label="Страничный" className="flex w-[18px] items-center justify-center">
            <svg width="13" height="12" viewBox="0 0 13 12"><path d="M.5.500h12v11H.5z" fill="#b4bfcf" stroke="#5d6370" /><path d="M3 1h3v6H3zM8 1h3v6H8z" fill="#fff" stroke="#5d6370" /></svg>
          </button>
        </div>
        <button className="w-11 text-center text-[#1e2f54]">100%</button>
        <button aria-label="Уменьшить"><ZoomRound plus={false} /></button>
        <label className="relative h-4 flex-1">
          <span className="sr-only">Масштаб</span>
          <span className="absolute inset-x-0 top-2 border-t border-[#44669c] shadow-[0_1px_0_#d5e6fb]" />
          <svg width="9" height="12" viewBox="0 0 9 12" className="absolute top-0.5 left-1/2 -translate-x-1/2"><path d="M.5.500h8v7l-4 4-4-4z" fill="#e7eef9" stroke="#44669c" /><path d="M4.500 3v5" stroke="#7d97be" /></svg>
          <input type="range" value={zoom} onChange={(e) => setZoom(Number(e.target.value))} className="absolute inset-0 w-full opacity-0" />
        </label>
        <button aria-label="Увеличить" className="mr-[5px]"><ZoomRound plus /></button>
      </div>
    </div>
  );
}

function ZoomRound({ plus }: { plus: boolean }) {
  return (
    <svg width="17" height="17" viewBox="0 0 17 17">
      <circle cx="8.500" cy="8.500" r="7.500" fill="#d9e2f0" stroke="#4a6797" /><circle cx="8.500" cy="8.500" r="6" fill="none" stroke="#fff" />
      <path d={plus ? 'M4.500 7.500h8v2h-8zM7.500 4.500h2v8h-2z' : 'M4.500 7.500h8v2h-8z'} fill="#4c5461" />
    </svg>
  );
}

/* ---------- taskbar ---------- */

function WindowsFlag() {
  return (
    <svg width="17" height="15" viewBox="0 0 17 15" className="shrink-0">
      <path d="M3 2q3-2 5 0L7 7Q4 5.500 2 7z" fill="#e5502c" /><path d="M9 2q3 1.500 6 0l-1 5q-3 1.500-6 0z" fill="#6bb543" />
      <path d="M2 8q3-1.500 5 0l-1 5q-3-2-5.500 0z" fill="#3d7edb" /><path d="M8 8q3 1.500 6 0l-1 5q-3 2-6 0z" fill="#f4c22b" />
    </svg>
  );
}

function DocIcon({ color, letter }: { color: string; letter: string }) {
  return (
    <svg width="17" height="16" viewBox="0 0 17 16" className="shrink-0">
      <path d="M4.500.500h9l3 3v12h-12z" fill="#fff" stroke="#5a6d92" /><path d="M10 5h5M10 8h5M10 11h5" stroke={color} />
      <path d="M.5 2.500h10v10H.5z" fill="#f4f8ff" stroke={color} />
      <text x="5.500" y="11" textAnchor="middle" fontSize="10" fontWeight="bold" fill={color} fontFamily="Liberation Sans, sans-serif">{letter}</text>
    </svg>
  );
}

function Taskbar() {
  const raised = 'border border-t-white border-r-[#404040] border-b-[#404040] border-l-white shadow-[inset_-1px_-1px_0_#808080]';
  return (
    <footer className="flex h-[29px] shrink-0 items-center border-t border-white bg-[#d4d0c8] px-0.5 font-[DejaVu_Sans_Condensed,DejaVu_Sans,sans-serif] text-[11px] text-black">
      <button className={`${raised} flex h-[22px] w-[51px] items-center gap-0.5 px-px font-bold`}><WindowsFlag />Пуск</button>
      <div className="flex w-[94px] items-center gap-1.5 pl-2">
        <button aria-label="Карты"><svg width="17" height="16" viewBox="0 0 17 16"><path d="M3.500.500h9l3 3v12h-12z" fill="#fff" stroke="#333" /><path d="M1 3h6v6H1z" fill="#c3141c" /></svg></button>
        <button aria-label="Панель M">
          <svg width="17" height="17" viewBox="0 0 17 17"><circle cx="8.500" cy="8.500" r="7.500" fill="#2fae4a" stroke="#157a2c" /><circle cx="8.500" cy="8.500" r="6" fill="none" stroke="#c9f0cf" />
            <text x="8.500" y="12.500" textAnchor="middle" fontSize="11" fontWeight="bold" fill="#fff" fontFamily="Liberation Serif, serif">M</text></svg>
        </button>
        <button aria-label="Обучение"><svg width="17" height="13" viewBox="0 0 17 13"><path d="M4 6h9v5q-4 3-9 0z" fill="#4c4c50" /><path d="M0 4l8-4 9 3-8 5z" fill="#6b6b70" /><path d="M7 4h4v6H9z" fill="#d0451f" /></svg></button>
      </div>
      <button aria-label="Ещё" className="-ml-3 mr-1 mb-2.5"><svg width="8" height="6" viewBox="0 0 8 6" fill="none" stroke="#000" strokeWidth="1.300"><path d="M.5.500L3 3 .5 5.500M4.500.500L7 3 4.500 5.500" /></svg></button>
      <button className="flex h-[22px] w-40 items-center gap-1 border border-t-[#404040] border-r-white border-b-white border-l-[#404040] bg-[#ebe9e4] px-1 font-bold">
        <DocIcon color="#2a8a3e" letter="X" />Журнал.xlsm
      </button>
      <button className={`${raised} ml-0.5 flex h-[22px] w-40 items-center gap-1 overflow-hidden px-1 whitespace-nowrap`}>
        <DocIcon color="#2c56b0" letter="W" />Электронный журнал.d...
      </button>
      <div className="flex-1" />
      <span className="mr-1 w-[15px] bg-[#0a246a] text-center leading-4 text-white">RU</span>
      <div className="flex h-6 items-center gap-0.5 border border-t-[#808080] border-r-white border-b-white border-l-[#808080] pr-2 pl-0.5">
        <svg width="16" height="16" viewBox="0 0 16 16"><path d="M.5.500h15v15H.5z" fill="#f1f7ee" stroke="#4c9a45" /><path d="M2 2h12v12H2z" fill="#1b9a3b" /><path d="M5 13V4M5 8q0 2 2.500 2T10 8V4M10 8q0 2 2 2" stroke="#fff" strokeWidth="1.800" fill="none" /></svg>
        <svg width="16" height="16" viewBox="0 0 16 16"><path d="M1 1h4v6l5-6h5L8 8l-2 6H4L1 6z" fill="#e3111c" /><path d="M7 7h6v7H9z" fill="#111" /><path d="M9 9l4 4M13 10v3h-3" stroke="#fff" fill="none" /></svg>
        <svg width="17" height="16" viewBox="0 0 17 16"><path d="M6 1h10v8H6z" fill="#7b1d2b" /><path d="M1 4h10v7H1z" fill="#1e1e22" /><path d="M3 12h7v2H3z" fill="#333" /><circle cx="11.500" cy="11" r="3.700" fill="#f3d9d2" stroke="#d8311c" strokeWidth="1.600" /><path d="M9 8.500l5 5" stroke="#d8311c" strokeWidth="1.600" /></svg>
        <svg width="16" height="16" viewBox="0 0 16 16"><path d="M0 0h16v16H0z" fill="#2c7f9c" /><path d="M3 6q3-5 5 0t4-2M3 13q2-5 5-3t5-3M10 2l2 3" stroke="#b7e3ee" fill="none" strokeWidth="1.300" /></svg>
        <svg width="17" height="16" viewBox="0 0 17 16"><path d="M1 5h2l4-4v14l-4-4H1z" fill="#f4f4f4" stroke="#6b6b6b" /><path d="M9 5q2 3 0 6M11 4q3 4 0 8M13.500 2.500q4 5.500 0 11" stroke="#47a045" fill="none" /></svg>
        <svg width="17" height="14" viewBox="0 0 17 14"><path d="M6 2h10v10H6z" fill="#9cc11c" /><path d="M1 7q4-6 9-1-4 6-9 1z" fill="#eef5d2" stroke="#59762b" /><circle cx="6" cy="7" r="1.500" fill="#59762b" /></svg>
        <time className="pl-0.5">18:37</time>
      </div>
    </footer>
  );
}

export default function App() {
  return (
    <div className="relative flex h-screen flex-col overflow-hidden bg-[#bfdbff] font-[Open_Sans,sans-serif]">
      <OfficeButton />
      <TitleBar />
      <TabBar />
      <Ribbon />
      <FormulaBar />
      <main className="flex min-h-0 flex-1">
        <Sheet />
        <VerticalScroll />
      </main>
      <SheetTabs />
      <StatusBar />
      <Taskbar />
    </div>
  );
}
